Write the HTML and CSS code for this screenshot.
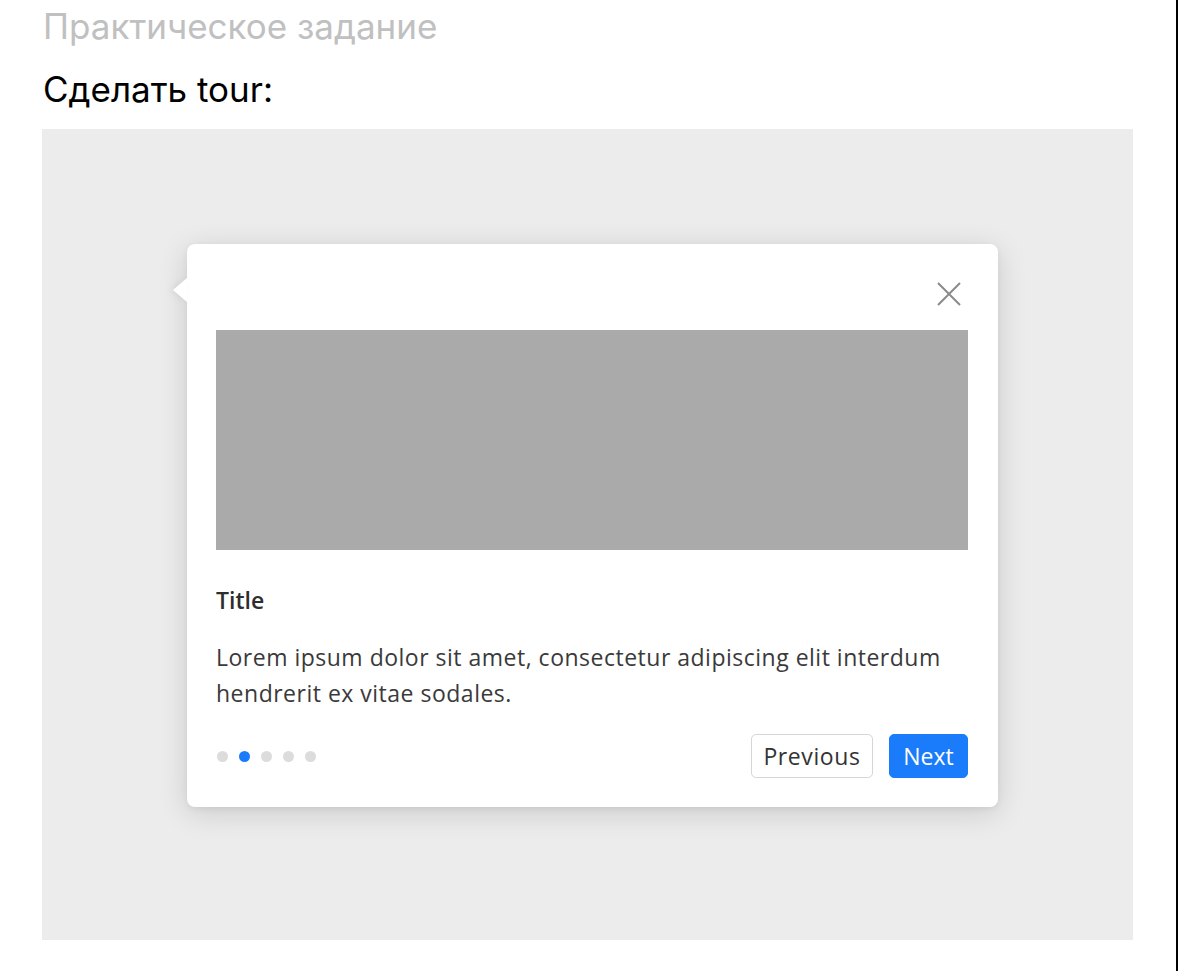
FILE: index.html
```html
<!DOCTYPE html>
<html lang="ru">
<head>
<meta charset="utf-8">
<title>Практическое задание</title>
<link rel="stylesheet" href="styles.css">
</head>
<body>
<div class="page">
  <h1 class="subject">Практическое задание</h1>
  <p class="task">Сделать tour:</p>
  <div class="stage">
    <div class="tour">
      <span class="tour-arrow"></span>
      <div class="tour-head">
        <button class="tour-close" aria-label="Close">
          <svg width="24" height="24" viewBox="0 0 24 24"><path d="M1 1 L23 23 M23 1 L1 23" stroke="#8a8a8a" stroke-width="2" fill="none"/></svg>
        </button>
      </div>
      <div class="tour-image"></div>
      <h2 class="tour-title">Title</h2>
      <p class="tour-text">Lorem ipsum dolor sit amet, consectetur adipiscing elit interdum hendrerit ex vitae sodales.</p>
      <div class="tour-foot">
        <div class="dots">
          <span class="dot"></span>
          <span class="dot active"></span>
          <span class="dot"></span>
          <span class="dot"></span>
          <span class="dot"></span>
        </div>
        <div class="actions">
          <button class="btn btn-prev">Previous</button>
          <button class="btn btn-next">Next</button>
        </div>
      </div>
    </div>
  </div>
</div>
</body>
</html>
```
FILE: styles.css
```css
html, body {
  margin: 0;
  padding: 0;
  background: #fff;
}
.page {
  box-sizing: border-box;
  width: 1178px;
  height: 971px;
  border-right: 2px solid #000;
  padding: 4px 0 0 42px;
  font-family: Inter, "Noto Sans", sans-serif;
}
.subject {
  margin: 0;
  font-size: 35px;
  font-weight: 400;
  line-height: 44px;
  color: #c0c0c0;
  padding-left: 1px;
}
.task {
  margin: 19px 0 0;
  font-size: 35px;
  line-height: 44px;
  color: #000;
  padding-left: 1px;
}
.stage {
  margin-top: 18px;
  width: 1091px;
  height: 811px;
  background: #ececec;
  box-sizing: border-box;
  padding: 115px 0 0 145px;
}
.tour {
  position: relative;
  width: 811px;
  height: 563px;
  box-sizing: border-box;
  background: #fff;
  border-radius: 8px;
  box-shadow: 0 6px 30px rgba(0, 0, 0, 0.14), 0 2px 6px rgba(0, 0, 0, 0.06);
  padding: 36px 30px 0 29px;
  font-family: "Open Sans", Lato, sans-serif;
  color: #333;
}
.tour-arrow {
  position: absolute;
  left: -14px;
  top: 34px;
  width: 0;
  height: 0;
  border-top: 12px solid transparent;
  border-bottom: 12px solid transparent;
  border-right: 14px solid #fff;
  filter: drop-shadow(-3px 0 3px rgba(0,0,0,0.06));
}
.tour-head {
  display: flex;
  justify-content: flex-end;
  height: 28px;
}
.tour-close {
  width: 28px;
  height: 28px;
  padding: 0;
  margin-right: 5px;
  border: 0;
  background: none;
  display: flex;
  align-items: center;
  justify-content: center;
}
.tour-image {
  margin-top: 22px;
  height: 220px;
  background: #aaaaaa;
}
.tour-title {
  margin: 36px 0 0;
  font-size: 23px;
  line-height: 28px;
  font-weight: 600;
  color: #2e2e2e;
}
.tour-text {
  margin: 25px 0 0;
  font-size: 23px;
  line-height: 36px;
  letter-spacing: 0.5px;
  color: #3a3a3a;
}
.tour-foot {
  margin-top: 23px;
  display: flex;
  align-items: center;
  justify-content: space-between;
}
.dots {
  display: flex;
  gap: 11px;
  padding-left: 1px;
}
.dot {
  width: 11px;
  height: 11px;
  border-radius: 50%;
  background: #dcdcdc;
}
.dot.active {
  background: #1a7cfa;
}
.actions {
  display: flex;
  gap: 16px;
}
.btn {
  height: 44px;
  border-radius: 5px;
  font-family: "Open Sans", Lato, sans-serif;
  font-size: 23px;
  padding: 0;
  cursor: pointer;
}
.btn-prev {
  width: 122px;
  background: #fff;
  border: 1px solid #d6d6d6;
  color: #333;
  letter-spacing: 0.6px;
}
.btn-next {
  width: 79px;
  background: #1a7cfa;
  border: 1px solid #1a7cfa;
  color: #fff;
}
```
